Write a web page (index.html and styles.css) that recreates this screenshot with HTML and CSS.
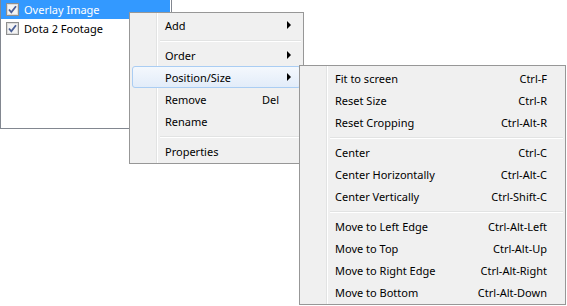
FILE: index.html
```html
<!DOCTYPE html>
<html lang="en">
<head>
  <meta charset="UTF-8">
  <title>Sources context menu</title>
  <link rel="stylesheet" href="styles.css">
</head>
<body>

  <div class="sources">
    <div class="source selected">
      <svg class="check" width="13" height="13" viewBox="0 0 13 13">
        <rect x="0.5" y="0.5" width="12" height="12" fill="#f4f4f4" stroke="#8e8f8f"/>
        <rect x="1.5" y="1.5" width="10" height="10" fill="none" stroke="#dcdcdc"/>
        <path d="M3 6.5 L5.3 9.3 L10 3.2" fill="none" stroke="#4a5f97" stroke-width="1.8"/>
      </svg>
      <span>Overlay Image</span>
    </div>
    <div class="source">
      <svg class="check" width="13" height="13" viewBox="0 0 13 13">
        <rect x="0.5" y="0.5" width="12" height="12" fill="#f4f4f4" stroke="#8e8f8f"/>
        <rect x="1.5" y="1.5" width="10" height="10" fill="none" stroke="#dcdcdc"/>
        <path d="M3 6.5 L5.3 9.3 L10 3.2" fill="none" stroke="#4a5f97" stroke-width="1.8"/>
      </svg>
      <span>Dota 2 Footage</span>
    </div>
  </div>

  <div class="menu main-menu">
    <div class="item"><span class="label">Add</span><span class="arrow"></span></div>
    <div class="separator"></div>
    <div class="item"><span class="label">Order</span><span class="arrow"></span></div>
    <div class="item hover"><span class="label">Position/Size</span><span class="arrow"></span></div>
    <div class="item"><span class="label">Remove</span><span class="key">Del</span><span class="no-arrow"></span></div>
    <div class="item"><span class="label">Rename</span></div>
    <div class="separator"></div>
    <div class="item"><span class="label">Properties</span></div>
  </div>

  <div class="menu sub-menu">
    <div class="item"><span class="label">Fit to screen</span><span class="key">Ctrl-F</span></div>
    <div class="item"><span class="label">Reset Size</span><span class="key">Ctrl-R</span></div>
    <div class="item"><span class="label">Reset Cropping</span><span class="key">Ctrl-Alt-R</span></div>
    <div class="separator"></div>
    <div class="item"><span class="label">Center</span><span class="key">Ctrl-C</span></div>
    <div class="item"><span class="label">Center Horizontally</span><span class="key">Ctrl-Alt-C</span></div>
    <div class="item"><span class="label">Center Vertically</span><span class="key">Ctrl-Shift-C</span></div>
    <div class="separator"></div>
    <div class="item"><span class="label">Move to Left Edge</span><span class="key">Ctrl-Alt-Left</span></div>
    <div class="item"><span class="label">Move to Top</span><span class="key">Ctrl-Alt-Up</span></div>
    <div class="item"><span class="label">Move to Right Edge</span><span class="key">Ctrl-Alt-Right</span></div>
    <div class="item"><span class="label">Move to Bottom</span><span class="key">Ctrl-Alt-Down</span></div>
  </div>

</body>
</html>
```

FILE: styles.css
```css
* {
  box-sizing: border-box;
}
body {
  margin: 0;
  background: #fff;
  font-family: 'Segoe UI', 'Noto Sans', sans-serif;
  font-size: 11px;
  color: #000;
  position: relative;
  height: 306px;
  overflow: hidden;
}
.sources {
  width: 172px;
  height: 129px;
  border: 1px solid #828790;
  border-top: none;
  padding-right: 1px;
}
.source {
  display: flex;
  align-items: center;
  height: 18px;
  padding-left: 5px;
  gap: 5px;
}
.source:first-child {
  height: 19px;
}
.source.selected {
  background: #3399ff;
  color: #fff;
}
.check {
  flex: none;
}
.menu {
  position: absolute;
  border: 1px solid #979797;
  padding: 1px 2px;
  background: linear-gradient(to right, #f0f0f0 26px, #e2e3e3 26px, #e2e3e3 27px, #fff 27px, #fff 28px, #f0f0f0 28px);
  background-origin: padding-box;
}
.main-menu {
  left: 129px;
  top: 12px;
  width: 175px;
}
.sub-menu {
  left: 299px;
  top: 65px;
  width: 267px;
}
.item {
  display: flex;
  align-items: center;
  height: 22px;
  padding: 0 9px 0 32px;
  border: 1px solid transparent;
  border-radius: 3px;
}
.item.hover {
  border-color: #aacdf3;
  background: linear-gradient(#f4f8fd, #e2ecf9);
}
.label {
  flex: 1;
}
.key {
  margin-right: 8px;
}
.sub-menu .key {
  margin-right: 6px;
}
.arrow {
  width: 0;
  height: 0;
  border-left: 4px solid #000;
  border-top: 4px solid transparent;
  border-bottom: 4px solid transparent;
}
.no-arrow {
  width: 4px;
}
.separator {
  height: 2px;
  margin: 4px 0 2px 28px;
  border-top: 1px solid #e2e3e3;
  border-bottom: 1px solid #fff;
}
```
